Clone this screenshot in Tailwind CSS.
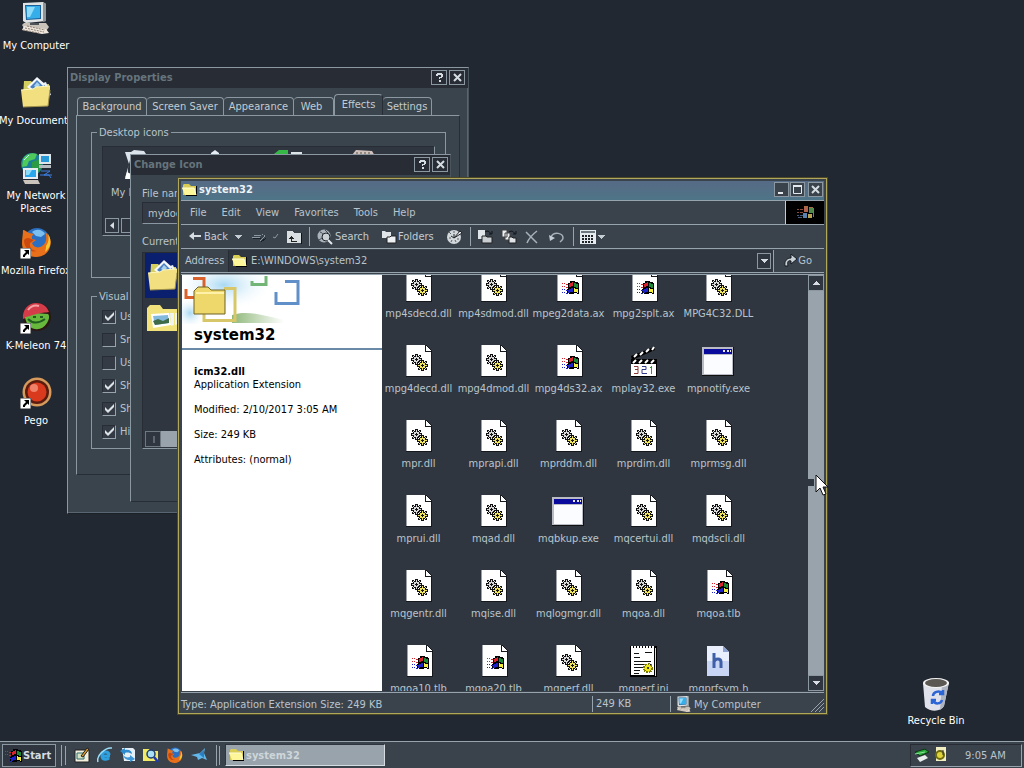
<!DOCTYPE html>
<html lang="en">
<head>
    <meta charset="UTF-8">
    <meta name="viewport" content="width=device-width, initial-scale=1.0">
    <title>Desktop</title>
    <script src="https://cdn.jsdelivr.net/npm/@tailwindcss/browser@4"></script>
</head>
<body class="h-screen flex flex-col overflow-hidden bg-[#222831] text-[#b9c4cc] text-[11px] leading-[13px] font-['DejaVu_Sans_Condensed','Noto_Sans',sans-serif] cursor-default select-none">

    <!-- Icon library -->
    <svg class="hidden">
        <symbol id="computer" viewBox="0 0 32 32">
            <path d="M3 1l20-1 3 2v17l-20 2-3-2z" fill="#dfe3e4"/>
            <path d="M23 0l3 2v17l-3 1z" fill="#8d9496"/>
            <path d="M5 3h16v14l-15 1z" fill="#1c5e96"/>
            <path d="M6 4h14v12l-13 1z" fill="#36aeea"/>
            <path d="M7 5h8l-5 10H7z" fill="#8fdcfa"/>
            <path d="M4 21h22l3 4-3 4-22-3-2-3z" fill="#c9c3ba"/>
            <path d="M4 24l22 3 3 4-7 1-20-4z" fill="#efe6dc"/>
            <path d="M5 26l19 4M7 24l18 4M3 28l16 3" stroke="#8b7f76" stroke-dasharray="2 1"/>
            <path d="M10 21h9v2h-9z" fill="#4d5357"/>
        </symbol>
        <symbol id="documents" viewBox="0 0 32 32">
            <path d="M4 4h7l3 3h15v12H3z" fill="#d5cf5f"/>
            <path d="M17 0l9 8-9 9-10-7z" fill="#f5f9ff"/>
            <path d="M17 3l6 6-6 6-7-5z" fill="#4d80c0"/>
            <path d="M17 5l3 3-3 3-3-2z" fill="#a9d4f0"/>
            <path d="M23 6l3-1 5 13-4 1z" fill="#eaf0fa"/>
            <path d="M24 8l5 9" stroke="#7592ba"/>
            <path d="M1 13l12-1 3-2 14-1v3l-2 17-25 1z" fill="#f1df80"/>
            <path d="M1 13l12-1 3-2 14-1" stroke="#fff8c0" fill="none"/>
            <path d="M3 30l25-1 2-16" stroke="#a0914a" fill="none"/>
        </symbol>
        <symbol id="pictures" viewBox="0 0 32 32">
            <path d="M1 4l3-3h10l3 4h14v22H1z" fill="#f1e27c"/>
            <path d="M5 10l18-1 2 12-18 3z" fill="#fff"/>
            <path d="M7 12l15-1 1 8-14 2z" fill="#83b9dd"/>
            <path d="M7 17l5-2 5 2 6-3v5l-14 2z" fill="#3f6a47"/>
            <path d="M24 9l4 0v12l-3 1zM29 9l3 0v11l-3 1z" fill="#eef3f7"/>
        </symbol>
        <symbol id="network" viewBox="0 0 32 32">
            <circle cx="12" cy="12" r="11" fill="#1d7f97"/>
            <path d="M3 7c3-5 8-7 14-5l-2 5-6 2-2 5-5 1z" fill="#4fc95a"/>
            <path d="M12 10l8-3 2 8-5 7-5-4z" fill="#2d9b43"/>
            <path d="M4 8l5-5" stroke="#c9f3ff"/>
            <path d="M19 2h12v10H19z" fill="#dfe6ea"/>
            <path d="M21 4h8v6h-8z" fill="#2798d8"/>
            <path d="M19 13h12v3H19z" fill="#b5bcc0"/>
            <path d="M3 16h15v11H3z" fill="#e6ecef"/>
            <path d="M5 18h11v7H5z" fill="#2aa6ea"/>
            <path d="M6 18h6l-3 5H6z" fill="#8fdcfa"/>
            <path d="M3 28h15l2 4H5z" fill="#cac4bd"/>
            <path d="M21 19h9l-6 4h8M20 23h9l2 3" stroke="#3c7fe0" fill="none"/>
        </symbol>
        <symbol id="shortcut" viewBox="0 0 11 11">
            <path d="M0 0h11v11H0z" fill="#fff"/>
            <path d="M0 0h11v11H0z" fill="none" stroke="#333"/>
            <path d="M4 2h5v5L7.500 5.500 5 8v1H3V7l3-3z" fill="#000"/>
        </symbol>
        <symbol id="firefox" viewBox="0 0 32 32">
            <circle cx="17" cy="14" r="13" fill="#2b6fc2"/>
            <path d="M12 5c5-4 11-2 13 2l-4 3-5-1z" fill="#7cc0ef"/>
            <path d="M3 3c2 0 4 2 6 3l5 1c-3 2-2 4-2 5l4 1-4 3c1 4 6 6 10 3 5-3 5-9 3-14 5 4 7 9 5 15-2 7-8 10-14 10C7 30 2 24 2 16 2 11 3 8 3 3z" fill="#e8701a"/>
            <path d="M28 7c4 6 3 14-3 18 1-3 1-5 1-6 3-4 3-8 2-12z" fill="#f9c62f"/>
            <path d="M4 13c2-2 4-3 7-1l3 1-4 3c-1 4 2 8 7 8-7 2-13-3-13-11z" fill="#c9490f"/>
        </symbol>
        <symbol id="kmeleon" viewBox="0 0 32 32">
            <circle cx="17" cy="15" r="14" fill="#2b1714"/>
            <path d="M3 17C2 8 8 1 16 1c6 0 11 3 13 9-4 1-8 0-12 3-4 2-9 2-14 4z" fill="#d43c4a"/>
            <path d="M8 8c3-4 7-5 11-4" stroke="#f4a0a4" stroke-width="2" fill="none"/>
            <path d="M5 15c8-1 10-5 23-3 2 2 1 6-1 9-3 5-8 7-12 6-6-1-9-6-10-12z" fill="#69b83e"/>
            <path d="M8 17c5 5 10 5 17 0M13 15h3M20 15h3" stroke="#215c20" stroke-width="2" fill="none"/>
        </symbol>
        <symbol id="pego" viewBox="0 0 32 32">
            <circle cx="17" cy="15" r="14.500" fill="#d59a5c"/>
            <circle cx="17" cy="15" r="12" fill="#5a1c10"/>
            <circle cx="17" cy="15" r="9.500" fill="#d9391c"/>
            <circle cx="14" cy="11" r="4" fill="#f0826a"/>
        </symbol>
        <symbol id="recycle" viewBox="0 0 32 34">
            <path d="M3 6l2 24c5 5 16 5 19-1l5-24z" fill="#dfe2ea"/>
            <path d="M22 8l7-3-5 24-4 4z" fill="#aeb3c2"/>
            <ellipse cx="16" cy="6" rx="13" ry="5" fill="#f3f3f3"/>
            <ellipse cx="16" cy="6" rx="11" ry="4" fill="#5b5753"/>
            <path d="M13 19c0-4 6-6 9-3M23 13v4h-4M13 23c2 5 8 4 9 0M12 27v-4h4" stroke="#2c66d6" stroke-width="2.500" fill="none"/>
        </symbol>
        <symbol id="folder" viewBox="0 0 16 16">
            <path d="M2 4h13v10H4z" fill="#000"/>
            <path d="M1 3l1-1h5l2 2h5v9H1z" fill="#d9cc55"/>
            <path d="M0 6h12l2 7H3z" fill="#fdf79a"/>
            <path d="M0 6h12l2 7" stroke="#fffcd8" fill="none"/>
        </symbol>
        <symbol id="flag" viewBox="0 0 17 15" shape-rendering="crispEdges">
            <path d="M6 3h2V1h5v1h3v1h1v11h-2v-1h-3v1H7v-1H5V9h1z" fill="#000"/>
            <path d="M8 3h2V2h1v4H9v1H7V4h1z" fill="#d8242c"/>
            <path d="M12 3h2v1h2v4h-2V7h-2z" fill="#1c8a35"/>
            <path d="M7 9h2V8h2v4H8v1H6v-3h1z" fill="#1c22c8"/>
            <path d="M12 8h1v1h3v4h-1v-1h-3z" fill="#f3ee3a"/>
            <path d="M0 3h1M2 3h1M4 4h2M0 6h1M2 6h1M4 7h2" stroke="#d8242c"/>
            <path d="M0 9h1M2 9h1M4 10h2M0 12h1M2 12h1M4 13h2" stroke="#1c22c8"/>
        </symbol>
        <symbol id="page" viewBox="0 0 32 32" shape-rendering="crispEdges">
            <path d="M4 0h20l6 6v26H4z" fill="#15181c"/>
            <path d="M4 0h19l6 6v25H4z" fill="#fff"/>
            <path d="M23 0v6h6z" fill="#fff"/>
            <path d="M23 0v6h6" stroke="#15181c" fill="none"/>
            <path d="M4 0v31" stroke="#9aa0a6"/>
        </symbol>
        <symbol id="gear" viewBox="0 0 11 11" shape-rendering="crispEdges">
            <path d="M4 0h3v2h1V1h2v2H9v1h2v3H9v1h1v2H8V9H7v2H4V9H3v1H1V8h1V7H0V4h2V3H1V1h2v1h1z" fill="#111"/>
            <path d="M5 1h1v2h2v2h2v1H8v2H6v2H5V8H3V6H1V5h2V3h2zM2 2h1v1H2zM8 2h1v1H8zM2 8h1v1H2zM8 8h1v1H8z" fill="currentColor"/>
            <path d="M4 5h1V4h1v1h1v1H6v1H5V6H4z" fill="#111"/>
        </symbol>
        <symbol id="dll" viewBox="0 0 32 32">
            <use href="#page" width="32" height="32"/>
            <use href="#gear" x="9" y="9" width="11" height="11" color="#d9d9d9"/>
            <use href="#gear" x="15" y="15" width="11" height="11" color="#efe45a"/>
        </symbol>
        <symbol id="ax" viewBox="0 0 32 32">
            <use href="#page" x="1" width="32" height="32"/>
            <use href="#flag" x="10" y="10" width="17" height="15"/>
        </symbol>
        <symbol id="exe" viewBox="0 0 32 32" shape-rendering="crispEdges">
            <path d="M0 2h32v29H0z" fill="#111"/>
            <path d="M0 2h31v28H0z" fill="#b9bcc4"/>
            <path d="M2 4h28v5H2z" fill="#0a0a9c"/>
            <path d="M21 5h2v2h-2zM25 5h2v2h-2zM28 5h1v2h-1z" fill="#e8e8e8"/>
            <path d="M2 10h28v19H2z" fill="#fbfcff"/>
        </symbol>
        <symbol id="clapper" viewBox="0 0 32 32">
            <path d="M4 11L27 2l1 3L5 15z" fill="#000"/>
            <path d="M7 12l3-3M13 10l3-3M19 7l3-3M25 5l2-3" stroke="#fff" stroke-width="2"/>
            <path d="M4 14h26v18H4z" fill="#000"/>
            <path d="M6 18l3-3M12 18l3-3M18 18l3-3M24 18l3-3" stroke="#fff" stroke-width="2"/>
            <path d="M4 19h25v12H4z" fill="#fff"/>
            <path d="M7 21.500h4v3H8M11 24.500v4H7" stroke="#8b3a3a" fill="none"/>
            <path d="M15 21.500h4v3h-4v4h5" stroke="#333a8b" fill="none"/>
            <path d="M24.500 21v8M23 22.500h2" stroke="#2f9a2f" fill="none"/>
        </symbol>
        <symbol id="ini" viewBox="0 0 32 32" shape-rendering="crispEdges">
            <path d="M3 1h27v31H3z" fill="#000"/>
            <path d="M4 3h23v27H4z" fill="#fff"/>
            <path d="M28 3h1v28h-1z" fill="#ddd"/>
            <path d="M4 2h24" stroke="#fff" stroke-width="2" stroke-dasharray="2 1"/>
            <path d="M7 8h5M18 7h7M7 12h6M7 16h17M7 19h17M7 22h9M7 25h6M7 28h5" stroke="#111"/>
            <circle cx="21" cy="23" r="4" fill="#efe81a" stroke="#7f7a00" stroke-width="2" stroke-dasharray="2 1"/>
            <path d="M20 22h2v2h-2z" fill="#444"/>
        </symbol>
        <symbol id="header" viewBox="0 0 32 32">
            <path d="M5 1h16l6 6v24H5z" fill="#e9effc"/>
            <path d="M5 16h22v15H5z" fill="#c8d5f4"/>
            <path d="M21 1l6 6h-6z" fill="#8ba1d2"/>
            <path d="M12 8v15M12 17c1-4 7-4 7 0v6" stroke="#3f5fa8" stroke-width="3" fill="none"/>
        </symbol>
        <symbol id="check" viewBox="0 0 9 9">
            <path d="M0 3l3 3 6-6v3L3 9 0 6z" fill="#dde4e8"/>
        </symbol>
        <symbol id="close" viewBox="0 0 9 9">
            <path d="M1 1l7 7M8 1l-7 7" stroke="#d5dde2" stroke-width="2"/>
        </symbol>
        <symbol id="help" viewBox="0 0 9 9" shape-rendering="crispEdges">
            <path d="M1 1h1V0h5v1h1v3H7v1H5v1H4V4h2V3h0V2H3v1H1zM4 7h2v2H4z" fill="#d5dde2"/>
        </symbol>
        <symbol id="down" viewBox="0 0 7 4" shape-rendering="crispEdges">
            <path d="M0 0h7v1H6v1H5v1H4v1H3V3H2V2H1V1H0z" fill="currentColor"/>
        </symbol>
    </svg>

    <main class="relative flex-1">
        <!-- Desktop icons -->
        <div id="desktopIcons" class="w-[72px] pt-[2px] text-white text-center"></div>
        <div class="absolute left-[900px] top-[677px] w-[72px] flex flex-col items-center text-white">
            <svg class="w-8 h-[34px]"><use href="#recycle"/></svg>
            <span class="mt-[3px] whitespace-nowrap">Recycle Bin</span>
        </div>

        <!-- Display Properties -->
        <section class="absolute left-[67px] top-[67px] w-[402px] h-[447px] flex flex-col bg-[#3a444c] border border-[#8c98a1] border-r-[#4a545d] border-b-[#1c2128] shadow-[inset_-1px_-1px_#596570]">
            <header class="h-[20px] shrink-0 flex items-center gap-[2px] pl-[2px] pr-[3px] pb-px bg-[#272c35]">
                <h2 class="flex-1 font-bold text-[#66747c]">Display Properties</h2>
                <button class="w-4 h-[15px] grid place-items-center border border-[#8c98a1] bg-[#272c35]" aria-label="Help"><svg class="size-[9px]"><use href="#help"/></svg></button>
                <button class="w-4 h-[15px] grid place-items-center border border-[#8c98a1] bg-[#272c35]" aria-label="Close"><svg class="size-[9px]"><use href="#close"/></svg></button>
            </header>
            <div class="flex-1 flex flex-col pt-[7px] pl-2 pr-2 pb-[38px]">
                <div class="flex items-end h-5 pl-px text-[#c3ccd2]">
                    <button class="w-[70px] h-[18px] border border-b-0 border-[#8c98a1] rounded-t">Background</button>
                    <button class="w-[77px] h-[18px] border border-b-0 border-l-0 border-[#8c98a1] rounded-t">Screen Saver</button>
                    <button class="w-[70px] h-[18px] border border-b-0 border-l-0 border-[#8c98a1] rounded-t">Appearance</button>
                    <button class="w-[40px] h-[18px] pr-1 border border-b-0 border-l-0 border-[#8c98a1] rounded-t">Web</button>
                    <button class="w-[49px] h-[22px] -mb-px pb-[3px] bg-[#3a444c] border border-b-0 border-[#8c98a1] border-r-[#272c35] rounded-t">Effects</button>
                    <button class="w-[49px] h-[18px] border border-b-0 border-l-0 border-[#8c98a1] rounded-t">Settings</button>
                </div>
                <div class="flex-1 flex flex-col pt-[10px] pl-[14px] pr-[13px] border border-[#8c98a1] border-r-[#272c35] border-b-[#272c35]">
                    <fieldset class="h-[152px] min-w-0 border border-[#8c98a1] px-[10px]">
                        <legend class="-ml-[5px] px-[2px]">Desktop icons</legend>
                        <div class="mt-[7px] h-[90px] flex flex-col justify-between bg-[#30363f] border border-[#272c35] border-b-[#8c98a1] border-r-[#8c98a1]">
                            <div class="flex gap-[42px] pl-2 pt-[3px]">
                                <div class="flex flex-col gap-[5px]">
                                    <svg class="ml-[14px] w-8 h-[31px]"><path d="M0 2h6l3-2 10 1 2 3v6H5l-2 8v8l-3 2 4-14z" fill="#dce3ea"/><path d="M2 22l4 2v5H0z" fill="#fff"/></svg>
                                    <span class="whitespace-nowrap w-[56px]">My Documents</span>
                                </div>
                                <svg class="w-3 h-8"><path d="M2 3l4-3 4 3v3H2z" fill="#e6eef5"/></svg>
                                <svg class="ml-[11px] w-7 h-8"><path d="M0 4l5-4h9v6H0z" fill="#35b845"/><path d="M17 2h11v4H17z" fill="#dde4e8"/></svg>
                                <svg class="ml-[8px] w-6 h-8"><path d="M0 5l4-5 16 1 3 5z" fill="#d2c2be"/><path d="M4 3h14" stroke="#554" stroke-dasharray="2 2"/></svg>
                            </div>
                            <div class="flex gap-[2px] pl-[2px] pb-[2px]">
                                <button class="w-[14px] h-[15px] grid place-items-center border border-[#8c98a1]" aria-label="Scroll left"><svg class="w-1 h-[7px]"><path d="M4 0v7L0 3.500z" fill="#d5dde2"/></svg></button>
                                <span class="w-[60px] h-[15px] border border-[#8c98a1]"></span>
                            </div>
                        </div>
                    </fieldset>
                    <fieldset class="mt-3 h-[159px] min-w-0 border border-[#8c98a1] px-[10px]">
                        <legend class="-ml-[5px] px-[2px]">Visual effects</legend>
                        <div id="effects" class="pt-[2px]"></div>
                    </fieldset>
                </div>
            </div>
        </section>

        <!-- Change Icon -->
        <section class="absolute left-[130px] top-[154px] w-[321px] h-[348px] flex flex-col bg-[#3a444c] border border-[#8c98a1] border-r-[#4a545d] border-b-[#272c35]">
            <header class="h-[20px] shrink-0 flex items-center gap-[2px] pl-[3px] pr-[2px] pb-px bg-[#272c35]">
                <h2 class="flex-1 font-bold text-[#66747c]">Change Icon</h2>
                <button class="w-4 h-[15px] grid place-items-center border border-[#8c98a1] bg-[#272c35]" aria-label="Help"><svg class="size-[9px]"><use href="#help"/></svg></button>
                <button class="w-4 h-[15px] grid place-items-center border border-[#8c98a1] bg-[#272c35]" aria-label="Close"><svg class="size-[9px]"><use href="#close"/></svg></button>
            </header>
            <div class="flex flex-col pt-3 px-[11px]">
                <label for="iconFile">File name:</label>
                <input id="iconFile" class="mt-[2px] h-[22px] w-[200px] pl-[5px] bg-[#343b44] border border-[#272c35] border-b-[#8c98a1] outline-none" value="mydocs.dll">
                <span class="mt-[11px]">Current icon:</span>
                <div class="mt-1 h-[197px] flex flex-col justify-between bg-[#30363f] border border-[#272c35] border-b-[#8c98a1]">
                    <div class="pl-[2px]">
                        <div class="w-[44px] h-[45px] pt-[7px] pl-[2px] bg-[#0a1f6e]"><svg class="size-8"><use href="#documents"/></svg></div>
                        <svg class="mt-[6px] ml-px size-8"><use href="#pictures"/></svg>
                    </div>
                    <div class="flex mb-px bg-[#98a3ab] border-l-2 border-[#30363f]">
                        <button class="w-4 h-4 grid place-items-center bg-[#30363f] border border-[#6d7880]" aria-label="Scroll left"><svg class="w-1 h-[7px]"><path d="M3 0v7" stroke="#8c98a1"/></svg></button>
                    </div>
                </div>
            </div>
        </section>

        <!-- Explorer window -->
        <section class="absolute left-[177px] top-[177px] w-[651px] h-[538px] flex flex-col bg-[#3a434c] border border-[#4d4926] outline outline-[#b0a75a] -outline-offset-2 p-[3px] pb-[2px]">
            <header class="h-[19px] shrink-0 flex items-center pl-px pr-px pb-[2px] bg-linear-to-b from-[#566b85] to-[#4e7488]">
                <svg class="size-4"><use href="#folder"/></svg>
                <h1 class="flex-1 pl-px font-bold text-[#eef3f6]">system32</h1>
                <button class="w-[15px] h-[15px] mr-px grid place-items-center bg-[#3a434c] border border-[#8c98a1]" aria-label="Minimize"><svg class="size-[9px]"><path d="M1 7h5v2H1z" fill="#e3e9ed"/></svg></button>
                <button class="w-[15px] h-[15px] mr-[3px] grid place-items-center bg-[#3a434c] border border-[#8c98a1]" aria-label="Maximize"><svg class="size-[9px]"><path d="M.500 1h8v7.500h-8z" fill="none" stroke="#e3e9ed"/><path d="M0 1h9" stroke="#e3e9ed" stroke-width="2"/></svg></button>
                <button class="w-[15px] h-[15px] grid place-items-center bg-[#3a434c] border border-[#8c98a1]" aria-label="Close"><svg class="size-[9px]"><use href="#close"/></svg></button>
            </header>

            <!-- Menu -->
            <nav class="h-6 shrink-0 flex border-t border-[#98a4ad]">
                <div class="flex-1 flex items-center gap-[15px] pl-[9px]">
                    <a href="#">File</a>
                    <a href="#">Edit</a>
                    <a href="#">View</a>
                    <a href="#">Favorites</a>
                    <a href="#">Tools</a>
                    <a href="#">Help</a>
                </div>
                <div class="w-[39px] grid place-items-center bg-black border-l border-[#c3ccd2]"><svg class="w-[17px] h-[15px]" shape-rendering="crispEdges"><path d="M7 2h4v5H7z" fill="#b0624c"/><path d="M12 3h4v5h-4z" fill="#4f8a4a"/><path d="M6 8h4v5H6z" fill="#5a82b0"/><path d="M11 9h4v4h-4z" fill="#b8a452"/><path d="M0 4h2M3 4h3M0 7h2M3 7h3" stroke="#8a4a3c"/><path d="M0 10h2M3 10h3M1 12h4" stroke="#3f5c80"/><path d="M7 1h4M12 2h4M16 3v9" stroke="#a86a3e" fill="none"/></svg></div>
            </nav>

            <!-- Toolbar -->
            <div class="h-6 shrink-0 flex items-center pl-2 border-t border-[#98a4ad] text-[#c3ccd2]">
                <button class="w-[39px] flex items-center gap-[3px]"><svg class="w-3 h-[9px] shrink-0"><path d="M0 4l5-4v3h7v2H5v3z" fill="#d5dde2"/></svg>Back</button>
                <button class="w-[24px] pl-[7px] text-left" aria-label="Back history"><svg class="w-[7px] h-1"><use href="#down"/></svg></button>
                <button class="w-[20px]" aria-label="Forward"><svg class="w-[14px] h-[11px]" shape-rendering="crispEdges"><path d="M0 6h8M8 10l4-4M12 6v-2M10 3h1M2 4h7" stroke="#8d99a2" fill="none"/><path d="M1 7h8M9 11l5-4" stroke="#1a1f25"/></svg></button>
                <button class="w-[14px]" aria-label="Forward history"><svg class="w-[7px] h-[5px]"><path d="M1 3l2 1 3-4" stroke="#8d99a2" fill="none"/></svg></button>
                <button class="w-[23px]" aria-label="Up"><svg class="w-4 h-[14px]" shape-rendering="crispEdges"><path d="M1 1h6l1 2h7v10H1z" fill="#d9dee1"/><path d="M15 3v11H2" stroke="#111" fill="none"/><path d="M5 11h6M5 11V6M3 8h5M4 7h3" stroke="#222" fill="none"/></svg></button>
                <span class="w-px h-[19px] mr-[7px] bg-[#98a4ad]"></span>
                <button class="w-[64px] flex items-center gap-[2px]"><svg class="size-4 shrink-0"><circle cx="7" cy="7" r="6.500" fill="#aab3b9"/><path d="M3 3c3 1 4 3 2 5M8 1l3 3M2 11l3-2" stroke="#454d55" fill="none"/><circle cx="9" cy="8" r="4" fill="#c9d1d5" stroke="#20252b"/><path d="M11 11l4 4" stroke="#e6ebee" stroke-width="2"/></svg>Search</button>
                <button class="w-[65px] flex items-center gap-px"><svg class="size-4 shrink-0"><path d="M1 2h3l1 1h5v6H1z" fill="#dfe5e8"/><path d="M6 8h3l1-1h5v7H6z" fill="#eef1f3" stroke="#222"/></svg>Folders</button>
                <button class="w-[24px]" aria-label="History"><svg class="size-4"><circle cx="8" cy="8" r="7" fill="#d3d8db"/><path d="M5 5L3 3M8 2v2M3 9h2M5 13l1-2M10 13l-1-2M13 10h-2" stroke="#59626a"/><path d="M8 9V5M8 9l-3-2" stroke="#20252b"/><path d="M8 9l6-7 2 2z" fill="#eef1f3" stroke="#20252b"/></svg></button>
                <span class="w-px h-[19px] mr-[6px] bg-[#98a4ad]"></span>
                <button class="w-[24px]" aria-label="Move To"><svg class="size-4"><path d="M1 1h7v9H1z" fill="#dfe5e8"/><path d="M5 7h4l1 1h5v6H5z" fill="#c8ced2" stroke="#222"/><path d="M8 3c3-2 5 0 6 2M12 5h3V2" stroke="#101418" fill="none"/></svg></button>
                <button class="w-[24px]" aria-label="Copy To"><svg class="size-4"><path d="M1 1h5v7H1zM4 4h5v7H4z" fill="#eef1f3" stroke="#444"/><path d="M8 8h3l1 1h3v5H8z" fill="#dfe5e8" stroke="#222"/><path d="M8 3c3-2 5 0 6 2M12 5h3V2" stroke="#101418" fill="none"/></svg></button>
                <button class="w-[24px]" aria-label="Delete"><svg class="size-[14px]"><path d="M1 2c4 4 7 7 11 11M12 1C8 4 4 8 2 13" stroke="#a6b1b8" stroke-width="1.500" fill="none"/></svg></button>
                <button class="w-[24px]" aria-label="Undo"><svg class="w-4 h-[14px]"><path d="M2 7c3-6 12-4 12 1 0 2-2 3-3 4" stroke="#a6b1b8" stroke-width="1.500" fill="none"/><path d="M0 5l1 6 5-3z" fill="#c3ccd2"/></svg></button>
                <span class="w-px h-[19px] mr-[6px] bg-[#98a4ad]"></span>
                <button class="flex items-center gap-[2px]" aria-label="Views"><svg class="size-4" shape-rendering="crispEdges"><path d="M0 1h16v14H0z" fill="#e6ebee"/><path d="M1 3h14" stroke="#6d7880" stroke-width="2"/><path d="M2 7h12M2 10h12M2 13h12" stroke="#20252b" stroke-width="2" stroke-dasharray="2 1"/></svg><svg class="w-[7px] h-1"><use href="#down"/></svg></button>
            </div>

            <!-- Address -->
            <div class="h-6 shrink-0 flex items-center pl-1 pr-3 border-t border-[#98a4ad]">
                <label for="address" class="w-[43px]">Address</label>
                <div class="flex-1 h-[22px] flex items-center pl-[3px] pr-[2px] bg-[#30363f] border-l border-l-[#272c35] border-r border-r-[#98a4ad]">
                    <svg class="size-4 shrink-0"><use href="#folder"/></svg>
                    <input id="address" class="flex-1 pl-[3px] outline-none" value="E:\WINDOWS\system32">
                    <button class="w-[14px] h-4 grid place-items-center text-[#d5dde2] border border-[#8c98a1]" aria-label="Open address list"><svg class="w-[7px] h-1"><use href="#down"/></svg></button>
                </div>
                <button class="flex items-center gap-px ml-[10px]"><svg class="w-[13px] h-[13px]"><path d="M1 12C0 7 3 4 7 4V0l6 5-6 5V7C4 6 3 8 4 12z" fill="#c8d1d6" stroke="#171b20"/></svg>Go</button>
            </div>

            <div class="h-[3px] shrink-0 border-y border-[#98a4ad]"></div>

            <!-- Content -->
            <div class="flex-1 min-h-0 flex ml-px">
                <aside class="w-[200px] shrink-0 bg-white text-black">
                    <svg class="block w-[200px] h-[49px]">
                        <defs>
                            <radialGradient id="sky"><stop offset="0" stop-color="#a9d9f3"/><stop offset="1" stop-color="#fff" stop-opacity="0"/></radialGradient>
                            <linearGradient id="grass"><stop offset="0" stop-color="#8fb87a"/><stop offset="1" stop-color="#fff"/></linearGradient>
                        </defs>
                        <ellipse cx="42" cy="10" rx="50" ry="26" fill="url(#sky)"/>
                        <ellipse cx="8" cy="38" rx="16" ry="16" fill="url(#sky)"/>
                        <path d="M50 40c15-5 30 0 52 5v3H50z" fill="url(#grass)"/>
                        <path d="M11 3.500h11V14M4 14v8.500h10" fill="none" stroke="#d9622c" stroke-width="3"/>
                        <path d="M70 6v3.500h14V1" fill="none" stroke="#72b577" stroke-width="3"/>
                        <path d="M103 6.500h13v22H94V17" fill="none" stroke="#6190c8" stroke-width="3"/>
                        <path d="M22 37v8.500h31V13.500H42" fill="none" stroke="#d8c768" stroke-width="3"/>
                        <path d="M12 16l4-4h10l3 3h14v24H12z" fill="#eed76b" stroke="#6f6326"/>
                        <path d="M14 18h28" stroke="#fff2a8" stroke-width="2"/>
                    </svg>
                    <h2 class="pl-3 pb-[2px] text-[15px] leading-[22px] font-bold font-['DejaVu_Sans']">system32</h2>
                    <div class="h-[2px] bg-[#6a89a6]"></div>
                    <div class="pl-3 pt-[15px]">
                        <p class="font-bold">icm32.dll</p>
                        <p>Application Extension</p>
                        <p class="mt-3">Modified: 2/10/2017 3:05 AM</p>
                        <p class="mt-3">Size: 249 KB</p>
                        <p class="mt-3">Attributes: (normal)</p>
                    </div>
                </aside>
                <div class="flex-1 min-w-0 bg-[#30363f] overflow-hidden">
                    <ul id="files" class="grid grid-cols-[repeat(5,75px)] -ml-px -mt-[5px] auto-rows-[75px] text-center"></ul>
                </div>
                <div class="w-4 shrink-0 flex flex-col bg-[#98a3ab]">
                    <button class="h-4 grid place-items-center bg-[#30363f] border border-[#8c98a1] text-[#d5dde2]" aria-label="Scroll up"><svg class="w-[7px] h-1 rotate-180"><use href="#down"/></svg></button>
                    <span class="flex-1"></span>
                    <button class="h-4 grid place-items-center bg-[#30363f] border border-[#8c98a1] text-[#d5dde2]" aria-label="Scroll down"><svg class="w-[7px] h-1"><use href="#down"/></svg></button>
                </div>
            </div>

            <!-- Status bar -->
            <footer class="h-5 shrink-0 flex items-center mt-px pt-[3px] border-t border-[#98a4ad]">
                <span class="flex-1">Type: Application Extension Size: 249 KB</span>
                <span class="w-[78px] h-4 pl-[3px] leading-[16px] border-l border-[#98a4ad]">249 KB</span>
                <span class="w-[141px] h-4 flex items-center gap-[2px] pl-[5px] border-l border-[#98a4ad]"><svg class="size-4"><use href="#computer"/></svg>My Computer</span>
                <svg class="w-[13px] h-[14px] self-end"><path d="M0 14L13 1M4 14l9-9M8 14l5-5" stroke="#98a4ad"/></svg>
            </footer>
        </section>

        <!-- Cursor -->
        <svg class="absolute left-[808px] top-[474px] w-5 h-6"><path d="M0 5h6v7H0z" fill="#30363f"/><path d="M8 1v17l4-4 3 7 3-1-3-7h5z" fill="#fff" stroke="#111"/></svg>
    </main>

    <!-- Taskbar -->
    <footer class="h-[27px] shrink-0 flex items-center px-[2px] bg-[#3a434c] border-t border-[#98a4ad]">
        <button class="w-[54px] h-[23px] flex items-center gap-px pl-[2px] bg-[#30363f] border border-[#8c98a1] font-bold text-[#d5dde2]"><svg class="w-[17px] h-[15px] shrink-0"><use href="#flag"/></svg>Start</button>
        <span class="w-px h-[21px] ml-[5px] bg-[#98a4ad]"></span>
        <span class="w-[2px] h-[19px] ml-[3px] border-l border-[#98a4ad]"></span>
        <div class="flex items-center gap-[7px] ml-[7px]">
            <button aria-label="Show Desktop"><svg class="size-4"><path d="M1 3h14v12H1z" fill="#f2efdc" stroke="#222"/><path d="M3 6h7v6H3z" fill="#d6e3c5" stroke="#2f6d74"/><path d="M7 9l6-8 2 1-6 8z" fill="#d99a27" stroke="#222"/></svg></button>
            <button aria-label="Internet Explorer"><svg class="size-4"><path d="M13 9H5c0 4 5 4 7 2M5 8c0-4 7-4 7 0" fill="none" stroke="#2e9fdf" stroke-width="3"/><path d="M1 15C-1 9 8 0 15 1" fill="none" stroke="#9adcf7" stroke-width="1.500"/></svg></button>
            <button aria-label="Outlook Express"><svg class="size-4"><path d="M2 1h11l2 2v11H4z" fill="#e6eff6"/><path d="M0 4l5-3v2c4-1 7 1 7 4-2-1-4-2-7-1v2z" fill="#2e8bd0"/><path d="M15 12l-5 3v-2c-4 0-6-2-7-5 2 2 4 3 7 2V8z" fill="#3f97d8"/></svg></button>
            <button aria-label="Search"><svg class="size-4"><path d="M0 2h6l2 2h7v10H0z" fill="#f1e865"/><circle cx="8" cy="7" r="4" fill="#a9e0f5" stroke="#1d3c6d" stroke-width="1.500"/><path d="M11 10l4 5" stroke="#2038b0" stroke-width="2.500"/></svg></button>
            <button aria-label="Firefox"><svg class="size-[17px]"><use href="#firefox"/></svg></button>
            <button aria-label="Messenger"><svg class="w-[18px] h-4"><path d="M1 8l9-2 5-5-1 5 3 7-5-2-4 2-1-3z" fill="#62b8ea"/><path d="M9 7l5-4v8z" fill="#2b7fc0"/></svg></button>
        </div>
        <span class="w-px h-[21px] ml-2 bg-[#98a4ad]"></span>
        <span class="w-[2px] h-[19px] ml-[2px] border-l border-[#98a4ad]"></span>
        <button class="w-[160px] h-[22px] ml-1 flex items-center gap-px pl-[3px] bg-[#98a3ab] border border-[#30363f] border-r-[#d5dde2] border-b-[#d5dde2] font-bold text-[#ced6da]"><svg class="size-4"><use href="#folder"/></svg>system32</button>
        <div class="ml-auto w-[112px] h-[23px] flex items-center gap-[2px] pl-[3px] border border-[#272c35] border-r-[#98a4ad] border-b-[#98a4ad]">
            <svg class="size-4"><path d="M1 5l10-3 4 3-9 4z" fill="#27a83a" stroke="#0d3314"/><path d="M3 11l8-3 3 3-8 4z" fill="#e9ecec"/><path d="M1 7l10-2" stroke="#88e092"/></svg>
            <svg class="size-4"><path d="M4 0h10v14H4z" fill="#f1efc2"/><circle cx="8" cy="8" r="4" fill="#ded33a" stroke="#6d6a10" stroke-width="2"/><path d="M11 3v5" stroke="#333"/></svg>
            <span class="ml-[15px]">9:05 AM</span>
        </div>
    </footer>

    <script>
        const desktop = [
            { icon: "computer", label: "My Computer" },
            { icon: "documents", label: "My Documents" },
            { icon: "network", label: "My Network<br>Places" },
            { icon: "firefox", label: "Mozilla Firefox", shortcut: true },
            { icon: "kmeleon", label: "K-Meleon 74", shortcut: true },
            { icon: "pego", label: "Pego", shortcut: true }
        ];

        const effects = [
            ["Use transition effects", true],
            ["Smooth edges of fonts", false],
            ["Use large icons", false],
            ["Show icons in all colors", true],
            ["Show window contents", true],
            ["Hide keyboard navigation", true]
        ];

        const files = [
            ["dll", "mp4sdecd.dll"], ["dll", "mp4sdmod.dll"], ["ax", "mpeg2data.ax"], ["ax", "mpg2splt.ax"], ["dll", "MPG4C32.DLL"],
            ["dll", "mpg4decd.dll"], ["dll", "mpg4dmod.dll"], ["ax", "mpg4ds32.ax"], ["clapper", "mplay32.exe"], ["exe", "mpnotify.exe"],
            ["dll", "mpr.dll"], ["dll", "mprapi.dll"], ["dll", "mprddm.dll"], ["dll", "mprdim.dll"], ["dll", "mprmsg.dll"],
            ["dll", "mprui.dll"], ["dll", "mqad.dll"], ["exe", "mqbkup.exe"], ["dll", "mqcertui.dll"], ["dll", "mqdscli.dll"],
            ["dll", "mqgentr.dll"], ["dll", "mqise.dll"], ["dll", "mqlogmgr.dll"], ["dll", "mqoa.dll"], ["ax", "mqoa.tlb"],
            ["ax", "mqoa10.tlb"], ["ax", "mqoa20.tlb"], ["dll", "mqperf.dll"], ["ini", "mqperf.ini"], ["header", "mqprfsym.h"]
        ];

        document.getElementById("desktopIcons").innerHTML = desktop.map(d => `
            <div class="h-[75px] flex flex-col items-center">
                <div class="relative size-8 shrink-0">
                    <svg class="size-8"><use href="#${d.icon}"/></svg>
                    ${d.shortcut ? `<svg class="absolute left-0 bottom-0 size-[11px]"><use href="#shortcut"/></svg>` : ""}
                </div>
                <span class="mt-[5px] whitespace-nowrap">${d.label}</span>
            </div>
        `).join("");

        document.getElementById("effects").innerHTML = effects.map(([label, on]) => `
            <label class="h-[23px] flex items-center gap-1 whitespace-nowrap">
                <span class="relative grid place-items-center size-[14px]">
                    <input type="checkbox" class="peer appearance-none size-[14px] bg-[#343b44] border border-[#272c35] border-r-[#98a4ad] border-b-[#98a4ad]" ${on ? "checked" : ""}>
                    <svg class="absolute hidden peer-checked:block size-[9px] pointer-events-none"><use href="#check"/></svg>
                </span>
                ${label}
            </label>
        `).join("");

        document.getElementById("files").innerHTML = files.map(([icon, name]) => `
            <li>
                <svg class="size-8 ml-[21px] mb-[5px]"><use href="#${icon}"/></svg>
                <span class="whitespace-nowrap">${name}</span>
            </li>
        `).join("");
    </script>
</body>
</html>
